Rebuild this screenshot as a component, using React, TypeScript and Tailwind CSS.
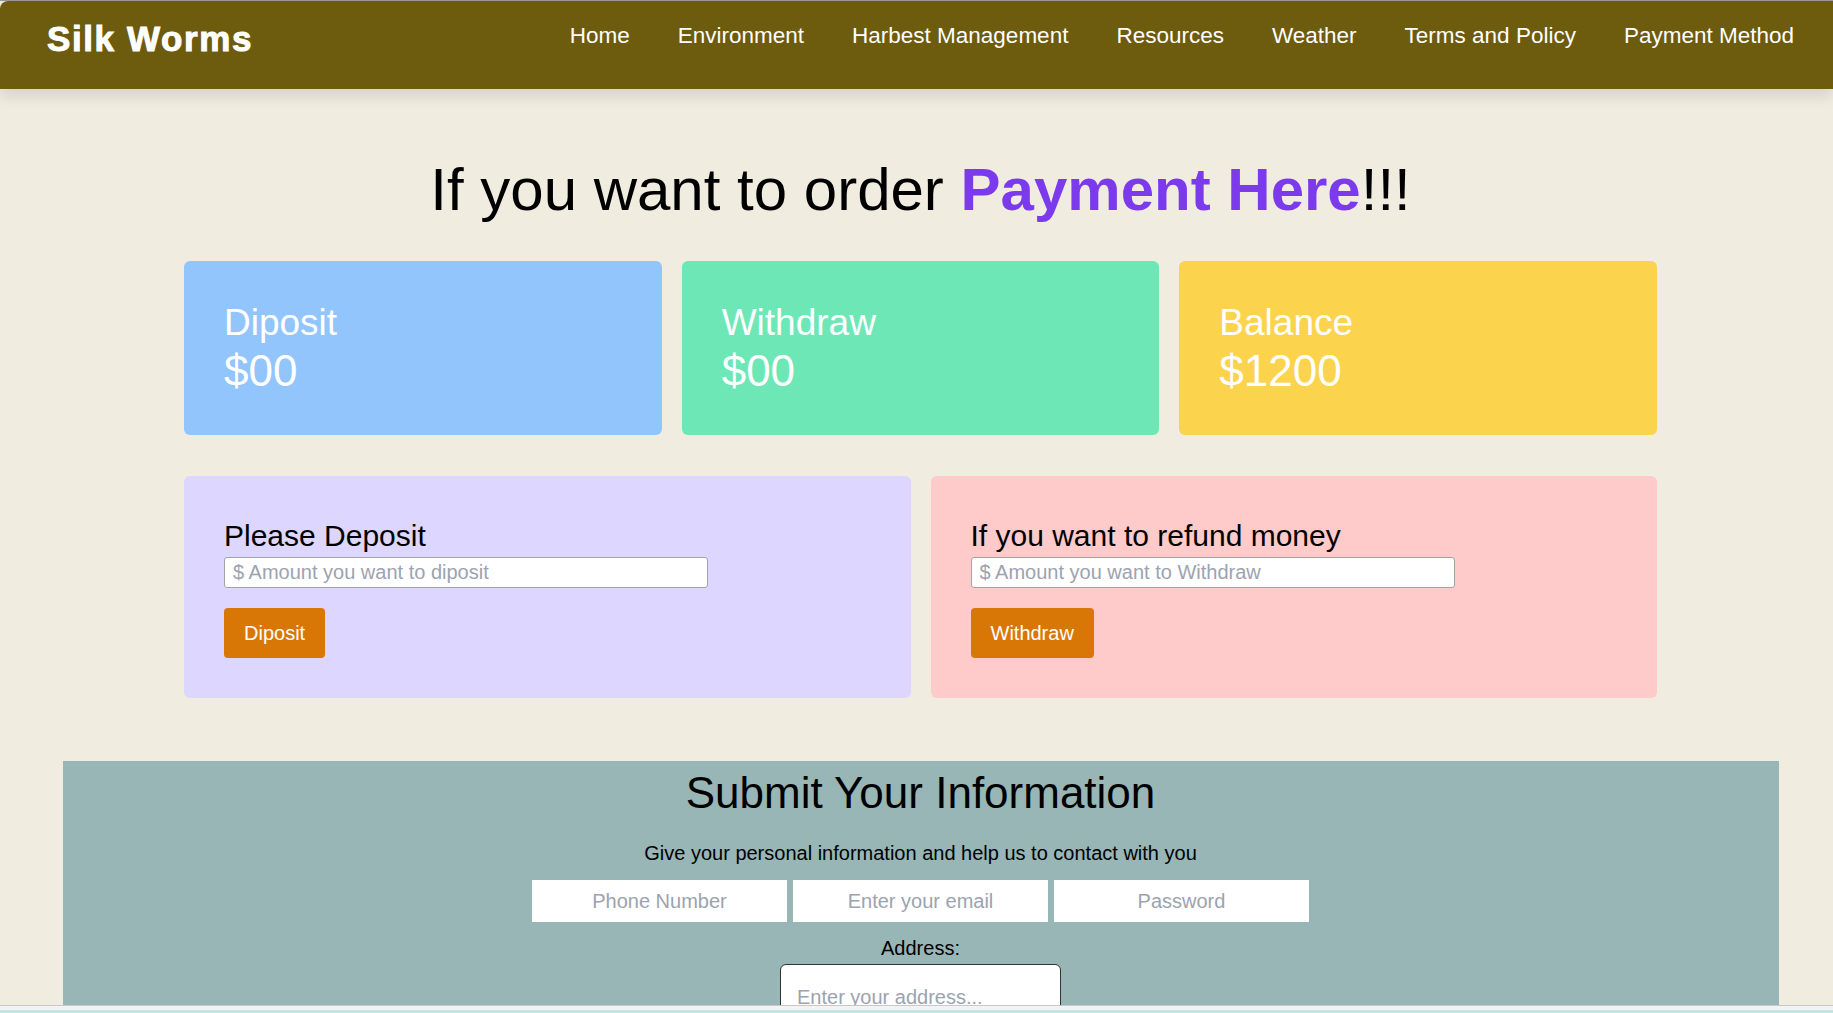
import React, { useState } from "react";

const navLinks = [
  "Home",
  "Environment",
  "Harbest Management",
  "Resources",
  "Weather",
  "Terms and Policy",
  "Payment Method",
];

const App = () => {
  const [deposit, setDeposit] = useState("");
  const [withdraw, setWithdraw] = useState("");

  return (
    <div className="min-h-screen bg-[#f0ece0] border-t border-[#9a9a9a] font-['Liberation_Sans',Arial,sans-serif]">
      {/* navbar */}
      <nav className="h-[88px] bg-[#6d5b0e] rounded-tl-lg shadow-[0_8px_14px_rgba(0,0,0,0.10)] pl-[47px] pr-[39px]">
        <div className="h-[70px] flex items-center justify-between">
          <p className="mt-1 text-[35px] leading-none font-black tracking-[1.6px] text-white [-webkit-text-stroke:1px_white]">
            Silk Worms
          </p>
          <ul className="flex items-center gap-12">
            {navLinks.map((link) => (
              <li key={link} className="text-[22.5px] leading-[26px] text-white">
                {link}
              </li>
            ))}
          </ul>
        </div>
      </nav>

      <div className="pl-2 pb-10">
        <h1 className="mt-[71px] text-center text-[60px] leading-none text-black">
          If you want to order{" "}
          <span className="font-bold text-[#7c3aed]">Payment Here</span>!!!
        </h1>

        {/* summary cards */}
        <div className="mx-auto mt-[41px] w-[1473px] grid grid-cols-3 gap-5">
          <div className="h-[174px] rounded-md bg-[#93c5fd] px-10 pt-[42px] text-white">
            <p className="text-[37px] leading-10">Diposit</p>
            <p className="text-[44px] leading-[56px]">$00</p>
          </div>
          <div className="h-[174px] rounded-md bg-[#6ee7b7] px-10 pt-[42px] text-white">
            <p className="text-[37px] leading-10">Withdraw</p>
            <p className="text-[44px] leading-[56px]">$00</p>
          </div>
          <div className="h-[174px] rounded-md bg-[#fcd34d] px-10 pt-[42px] text-white">
            <p className="text-[37px] leading-10">Balance</p>
            <p className="text-[44px] leading-[56px]">$1200</p>
          </div>
        </div>

        {/* deposit / withdraw */}
        <div className="mx-auto mt-[41px] w-[1473px] grid grid-cols-2 gap-5">
          <div className="h-[222px] rounded-md bg-[#ddd6fe] px-10 pt-[42px]">
            <p className="text-3xl text-black">Please Deposit</p>
            <input
              value={deposit}
              onChange={(e) => setDeposit(e.target.value)}
              placeholder="$ Amount you want to diposit"
              className="mt-[3px] block w-[484px] h-[31px] rounded-[3px] border border-[#a3a3a3] bg-white px-2 text-xl outline-none placeholder:text-[#9ca3af]"
            />
            <button className="mt-5 h-[50px] px-5 rounded bg-[#d97706] text-xl text-white">
              Diposit
            </button>
          </div>
          <div className="h-[222px] rounded-md bg-[#fecaca] px-10 pt-[42px]">
            <p className="text-3xl text-black">If you want to refund money</p>
            <input
              value={withdraw}
              onChange={(e) => setWithdraw(e.target.value)}
              placeholder="$ Amount you want to Withdraw"
              className="mt-[3px] block w-[484px] h-[31px] rounded-[3px] border border-[#a3a3a3] bg-white px-2 text-xl outline-none placeholder:text-[#9ca3af]"
            />
            <button className="mt-5 h-[50px] px-5 rounded bg-[#d97706] text-xl text-white">
              Withdraw
            </button>
          </div>
        </div>

        {/* info form */}
        <div className="mx-auto mt-[63px] w-[1716px] bg-[#97b6b5] pt-[10px] pb-10 text-center">
          <h2 className="text-[44px] leading-none text-black">Submit Your Information</h2>
          <p className="mt-6 text-xl leading-7 text-black">
            Give your personal information and help us to contact with you
          </p>
          <div className="mt-[13px] flex justify-center gap-[6px]">
            <input
              placeholder="Phone Number"
              className="w-[255px] h-[42px] bg-white text-center text-xl outline-none placeholder:text-[#9ca3af]"
            />
            <input
              placeholder="Enter your email"
              className="w-[255px] h-[42px] bg-white text-center text-xl outline-none placeholder:text-[#9ca3af]"
            />
            <input
              placeholder="Password"
              type="password"
              className="w-[255px] h-[42px] bg-white text-center text-xl outline-none placeholder:text-[#9ca3af]"
            />
          </div>
          <p className="mt-3 text-xl leading-7 text-black">Address:</p>
          <textarea
            placeholder="Enter your address..."
            className="mt-[2px] w-[281px] h-[110px] resize-none rounded-md border border-[#333] bg-white px-4 py-[18px] text-xl leading-7 outline-none placeholder:text-[#9ca3af] align-top"
          />
        </div>
      </div>

      {/* window bottom edge */}
      <div className="fixed bottom-0 left-0 right-0 h-[8px] border-t border-[#c8c8c8] bg-[#f3f3f5] border-b-[3px] border-b-[#bfe9e4]" />
    </div>
  );
};

export default App;
